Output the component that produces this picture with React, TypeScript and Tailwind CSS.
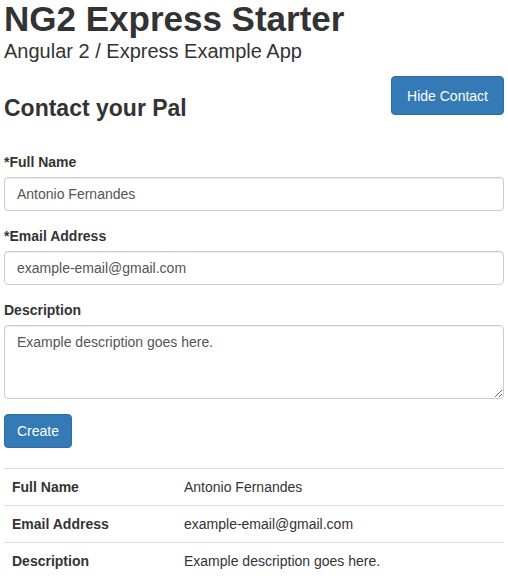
import React from "react";

const rows = [
  ["Full Name", "Antonio Fernandes"],
  ["Email Address", "example-email@gmail.com"],
  ["Description", "Example description goes here."],
];

const inputCls =
  "block w-full h-[34px] px-[12px] py-[6px] text-[14px] leading-[20px] text-[#555] bg-white border border-[#ccc] rounded-[4px] shadow-[inset_0_1px_1px_rgba(0,0,0,0.075)] outline-none";

export default function App() {
  return (
    <div
      className="px-[4px] text-[#333] text-[14px] leading-[20px] bg-white min-h-[582px]"
      style={{ fontFamily: '"Liberation Sans", Arial, sans-serif' }}
    >
      <h1 className="text-[35px] leading-[37px] font-bold m-0">NG2 Express Starter</h1>
      <div className="mt-[2px] text-[20px] leading-[24px]">Angular 2 / Express Example App</div>

      <div className="flex justify-between items-start">
        <h3 className="mt-[33px] text-[23px] leading-[24px] font-bold">Contact your Pal</h3>
        <button className="mt-[13px] h-[39px] px-[15px] text-[14px] text-white bg-[#337ab7] border border-[#2e6da4] rounded-[4px]">
          Hide Contact
        </button>
      </div>

      <form className="mt-[32px]" onSubmit={(e) => e.preventDefault()}>
        <div className="mb-[15px]">
          <label className="block mb-[5px] font-bold">*Full Name</label>
          <input className={inputCls} defaultValue="Antonio Fernandes" />
        </div>
        <div className="mb-[15px]">
          <label className="block mb-[5px] font-bold">*Email Address</label>
          <input className={inputCls} defaultValue="example-email@gmail.com" />
        </div>
        <div className="mb-[15px]">
          <label className="block mb-[5px] font-bold">Description</label>
          <textarea
            rows={3}
            className="block w-full h-[74px] px-[12px] py-[6px] text-[14px] leading-[20px] text-[#555] bg-white border border-[#ccc] rounded-[4px] shadow-[inset_0_1px_1px_rgba(0,0,0,0.075)] outline-none"
            defaultValue="Example description goes here."
          />
        </div>
        <button className="h-[34px] px-[12px] text-[14px] text-white bg-[#337ab7] border border-[#2e6da4] rounded-[4px]">
          Create
        </button>
      </form>

      <table className="mt-[20px] w-full border-collapse">
        <tbody>
          {rows.map(([k, v]) => (
            <tr key={k}>
              <td className="w-[172px] p-[8px] border-t border-[#ddd] font-bold">{k}</td>
              <td className="p-[8px] border-t border-[#ddd]">{v}</td>
            </tr>
          ))}
        </tbody>
      </table>
    </div>
  );
}
